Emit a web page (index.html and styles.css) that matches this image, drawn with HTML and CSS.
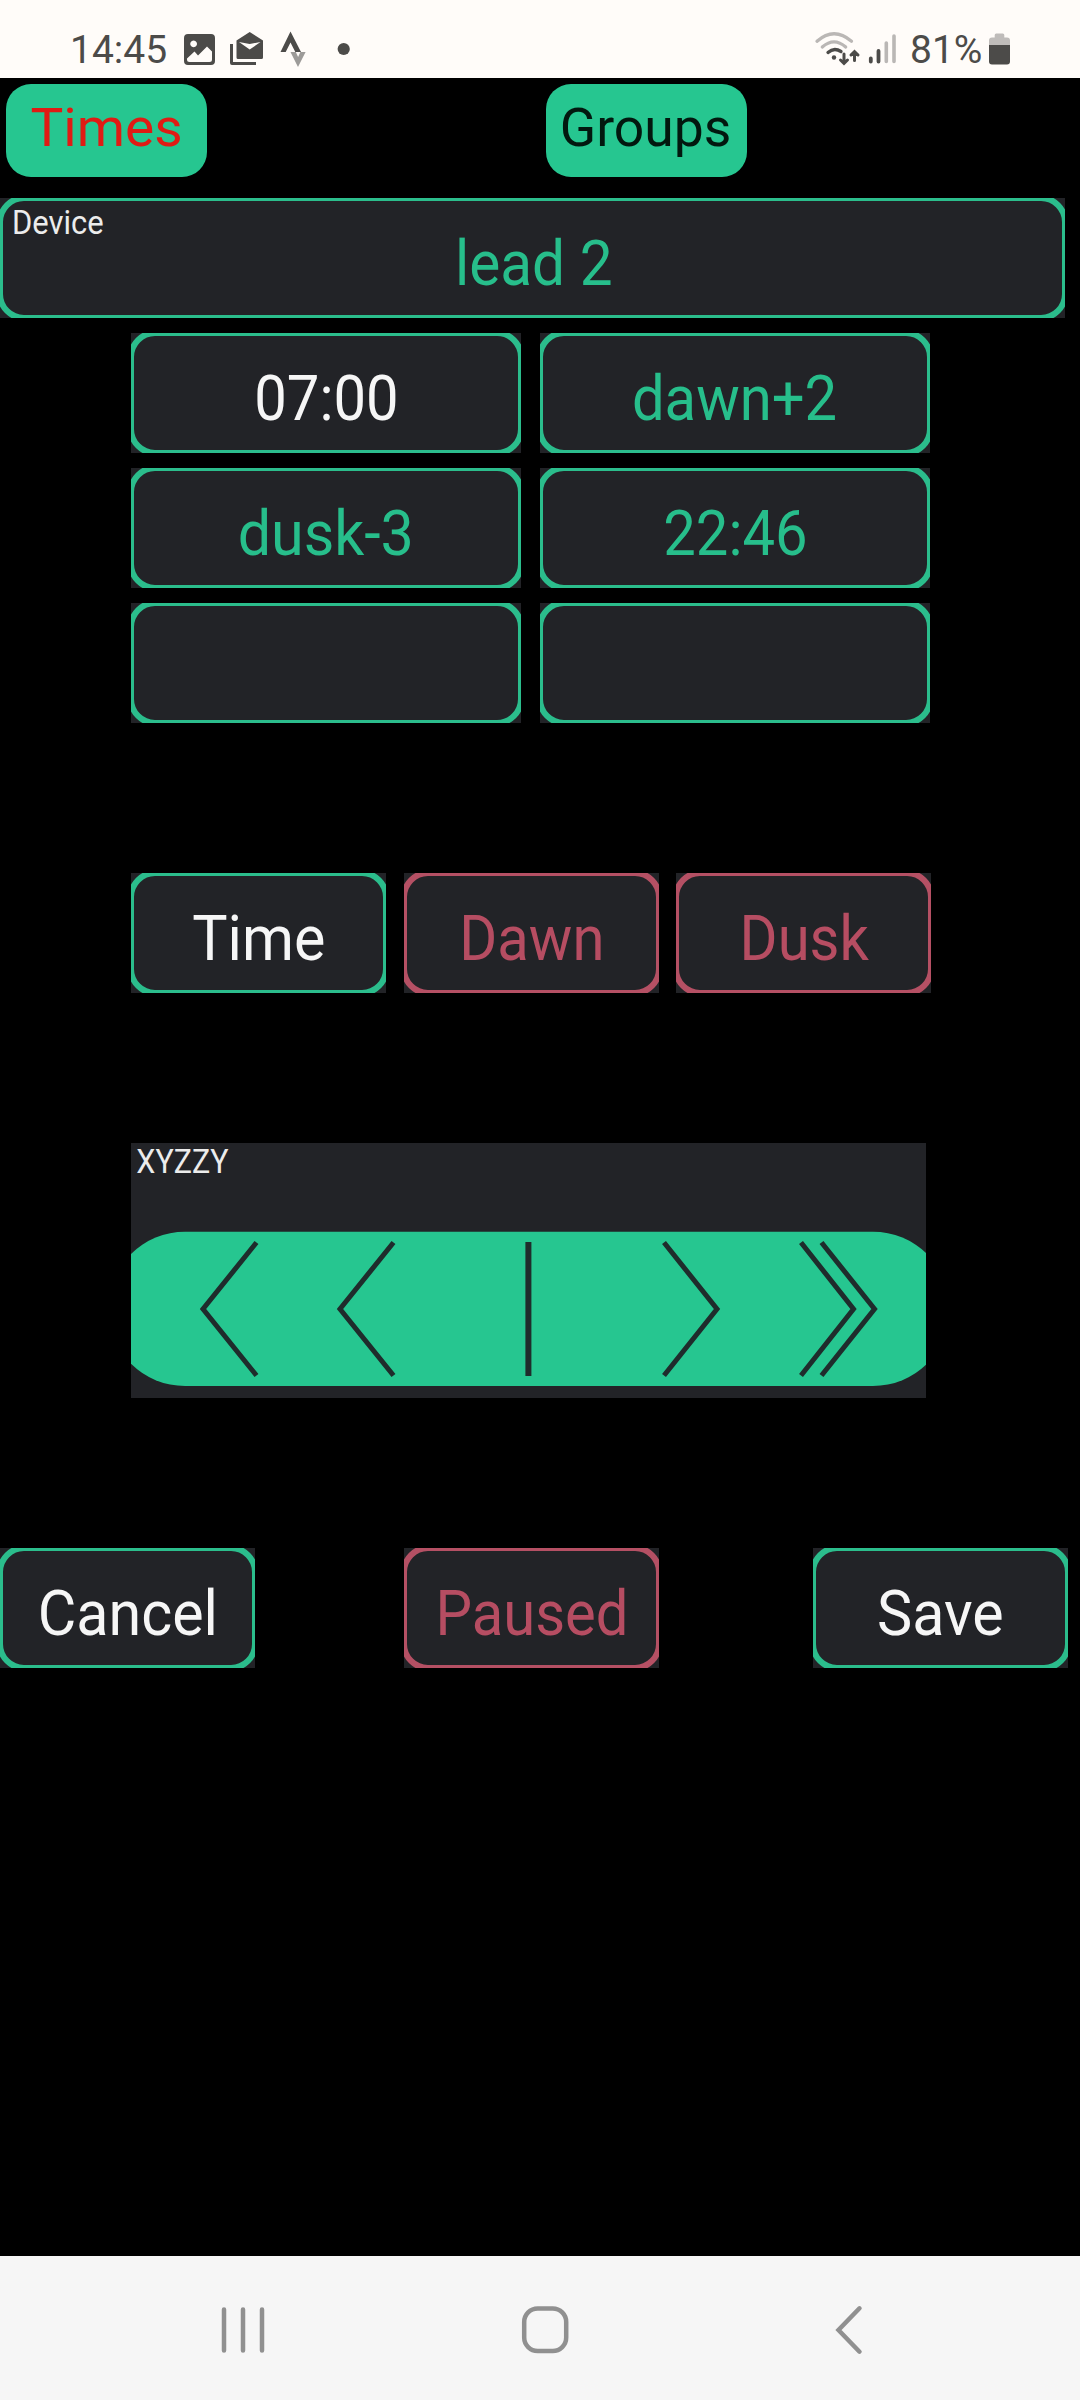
FILE: index.html
```html
<!DOCTYPE html>
<html lang="en">
<head>
<meta charset="utf-8">
<title>Times</title>
<link rel="stylesheet" href="styles.css">
</head>
<body>
<header class="status">
  <span class="clock">14:45</span>
  <svg class="notices" width="180" height="56" viewBox="180 22 180 56" fill="#4c4b49">
    <path fill-rule="evenodd" d="M188 34h23a4 4 0 0 1 4 4v23a4 4 0 0 1-4 4h-23a4 4 0 0 1-4-4V38a4 4 0 0 1 4-4zM193.600 40.500a3.400 3.400 0 1 0 .01 0zM187 59.500a2.500 2.500 0 0 0 2.500 2.500h20a2.500 2.500 0 0 0 2.500-2.500V51.500L207 46.500 198 55.500 194.500 51.500 187 58.500z"/>
    <path d="M230 44h3v18h23v3h-24a2 2 0 0 1-2-2z"/>
    <path fill-rule="evenodd" d="M236.500 40.500 249.700 32 263 40.500V57.500a1.500 1.500 0 0 1-1.500 1.500h-23.500a1.500 1.500 0 0 1-1.500-1.500zM239 42 249.700 49.500 260.500 42 249.700 44z"/>
    <path d="M290.500 31.500 301 52h-5.700L290.500 42.500 285.700 52H280.500z"/>
    <path fill="#9d9b99" d="M290.500 52h5.300l2.300 5 2.300-5h5.200L298 67z"/>
    <circle cx="343.700" cy="49" r="6.100"/>
  </svg>
  <svg class="signals" width="90" height="56" viewBox="812 22 90 56" fill="none" stroke-width="3.300" stroke-linecap="round">
    <path stroke="#bab7b5" d="M817 41.200Q834 26.200 851.500 41.200M822.300 47Q834 36.800 845.700 47"/>
    <path stroke="#4c4b49" d="M828 52.500Q834 47 841 51.500"/>
    <circle cx="834" cy="57.500" r="2.200" fill="#4c4b49"/>
    <path stroke="#4c4b49" stroke-width="3" d="M844 54v9M840.500 60l3.500 3.500 3.500-3.500M854.500 60.500v-9M851 55l3.500-3.500L858 55"/>
    <path stroke="#4c4b49" stroke-width="3.800" d="M870.800 58.500v3M878.500 51v10.500"/>
    <path stroke="#bab7b5" stroke-width="3.600" d="M886.300 43v18.500M894 36v25.500"/>
  </svg>
  <span class="charge">81%</span>
  <svg class="battery" width="22" height="56" viewBox="989 22 22 56">
    <path fill="#bfbcba" d="M989 46v-5.500a3 3 0 0 1 3-3h2.700V35a1.500 1.500 0 0 1 1.500-1.500h6.600a1.500 1.500 0 0 1 1.500 1.500v2.500h2.700a3 3 0 0 1 3 3V46z"/>
    <path fill="#4c4b49" d="M989 45h21v16.500a3 3 0 0 1-3 3h-15a3 3 0 0 1-3-3z"/>
  </svg>
</header>

<main class="app">
  <nav class="tabs">
    <button class="tab tab-current"><span>Times</span></button>
    <button class="tab"><span>Groups</span></button>
  </nav>

  <button class="box device">
    <small class="caption">Device</small>
    <span class="w-lead">lead 2</span>
  </button>

  <section class="slots">
    <button class="box active"><span>07:00</span></button>
    <button class="box"><span>dawn+2</span></button>
    <button class="box"><span class="w-wide">dusk-3</span></button>
    <button class="box"><span>22:46</span></button>
    <button class="box"></button>
    <button class="box"></button>
  </section>

  <section class="modes">
    <button class="box active"><span class="w-wide">Time</span></button>
    <button class="box off"><span class="w-mode">Dawn</span></button>
    <button class="box off"><span class="w-mode">Dusk</span></button>
  </section>

  <section class="shuttle">
    <small class="caption">XYZZY</small>
    <svg class="shuttle-bar" width="795" height="156" viewBox="131 1231 795 156">
      <rect x="108" y="1231.700" width="842" height="154.300" rx="77.150" fill="#26c690"/>
      <g fill="none" stroke="#1f2c2c" stroke-width="5">
        <path d="M256.500 1242.500 203 1309l53.500 66.500"/>
        <path d="M393.500 1242.500 340 1309l53.500 66.500"/>
        <path stroke-width="6" d="M528.400 1242v134"/>
        <path d="M664 1242.500 717 1309l-53 66.500"/>
        <path d="M801 1242.500 853.500 1309 801 1375.500M821.500 1242.500 874.500 1309l-53 66.500"/>
      </g>
    </svg>
  </section>

  <footer class="actions">
    <button class="box active"><span class="w-wide">Cancel</span></button>
    <button class="box off"><span>Paused</span></button>
    <button class="box active"><span class="w-wide">Save</span></button>
  </footer>
</main>

<nav class="system">
  <svg width="1080" height="144" viewBox="0 2256 1080 144" fill="none" stroke="#909090" stroke-width="4.500" stroke-linecap="round">
    <path d="M224 2309.500v41M243 2309.500v41M262 2309.500v41"/>
    <rect x="524.200" y="2308.500" width="42" height="42.500" rx="13.500"/>
    <path d="M859.500 2308.300 838.500 2330l21 21.700"/>
  </svg>
</nav>
</body>
</html>
```
FILE: styles.css
```css
* {
  box-sizing: border-box;
}

body {
  margin: 0;
  width: 1080px;
  height: 2400px;
  display: flex;
  flex-direction: column;
  background: #000;
  font-family: Roboto, "Liberation Sans", sans-serif;
}

button {
  margin: 0;
  padding: 0;
  border: 0;
  font: inherit;
  color: inherit;
}

svg {
  display: block;
  flex: none;
}

/* phone status bar */
.status {
  height: 78px;
  padding: 22px 0 0 70px;
  display: flex;
  align-items: center;
  background: #fffcf9;
  color: #4c4b49;
  font-size: 39px;
  line-height: 56px;
}

.clock {
  width: 110px;
}

.signals {
  margin-left: 452px;
}

.charge {
  width: 79px;
  padding-left: 8px;
  white-space: nowrap;
}

.battery {
  margin-left: 8px;
}

/* application area */
.app {
  flex: 1;
}

.tabs {
  height: 120px;
  padding: 6px;
  display: grid;
  grid-template-columns: 201px 201px;
  column-gap: 339px;
}

.tab {
  height: 93px;
  padding: 0 1px 5px 0;
  border-radius: 25px;
  background: #26c690;
  color: #02180f;
  font-size: 54px;
  line-height: 88px;
}

.tab span {
  display: inline-block;
  transform: scaleX(0.99);
}

.tab-current {
  padding-right: 0;
  color: #e01b14;
}

.tab-current span {
  transform: scaleX(1.02);
}

.box {
  position: relative;
  overflow: hidden;
  height: 120px;
  padding-top: 12px;
  background: #222327;
  color: #27be8b;
  font-size: 63px;
  line-height: 108px;
  white-space: nowrap;
}

/* the outline straddles the edge, so only its inner half shows */
.box::after {
  content: "";
  position: absolute;
  inset: -3px;
  border: 6.4px solid #2bbd8c;
  border-radius: 27px;
}

.box span,
.caption {
  display: inline-block;
  transform: scaleX(0.92);
}

.box .w-lead {
  margin-left: 2px;
  transform: scaleX(0.93);
}

.box .w-wide {
  transform: scaleX(0.94);
}

.box .w-mode {
  margin-left: 2px;
}

.box.active {
  color: #f6f6f6;
}

.box.off {
  color: #b64d62;
}

.off::after {
  border-color: #b55064;
}

.caption {
  color: #ececec;
  font-size: 34px;
  line-height: 36px;
  transform-origin: left;
}

.device {
  display: block;
  width: 1065px;
}

.device .caption {
  position: absolute;
  left: 12px;
  top: 6px;
  transform: scaleX(0.91);
}

.slots {
  margin: 15px 0 0 131px;
  display: grid;
  grid-template-columns: 390px 390px;
  gap: 15px 19px;
}

.modes {
  width: 800px;
  margin: 150px 0 0 131px;
  display: flex;
  justify-content: space-between;
}

.modes .box,
.actions .box {
  width: 255px;
}

.shuttle {
  width: 795px;
  height: 255px;
  margin: 150px 0 0 131px;
  display: flex;
  flex-direction: column;
  background: #222327;
}

.shuttle .caption {
  height: 88px;
  padding-left: 6px;
  transform: scaleX(0.895);
}

.actions {
  margin-top: 150px;
  display: grid;
  grid-template-columns: 404px 409px 255px;
}

/* phone navigation bar */
.system {
  height: 144px;
  background: #f6f6f6;
}
```
